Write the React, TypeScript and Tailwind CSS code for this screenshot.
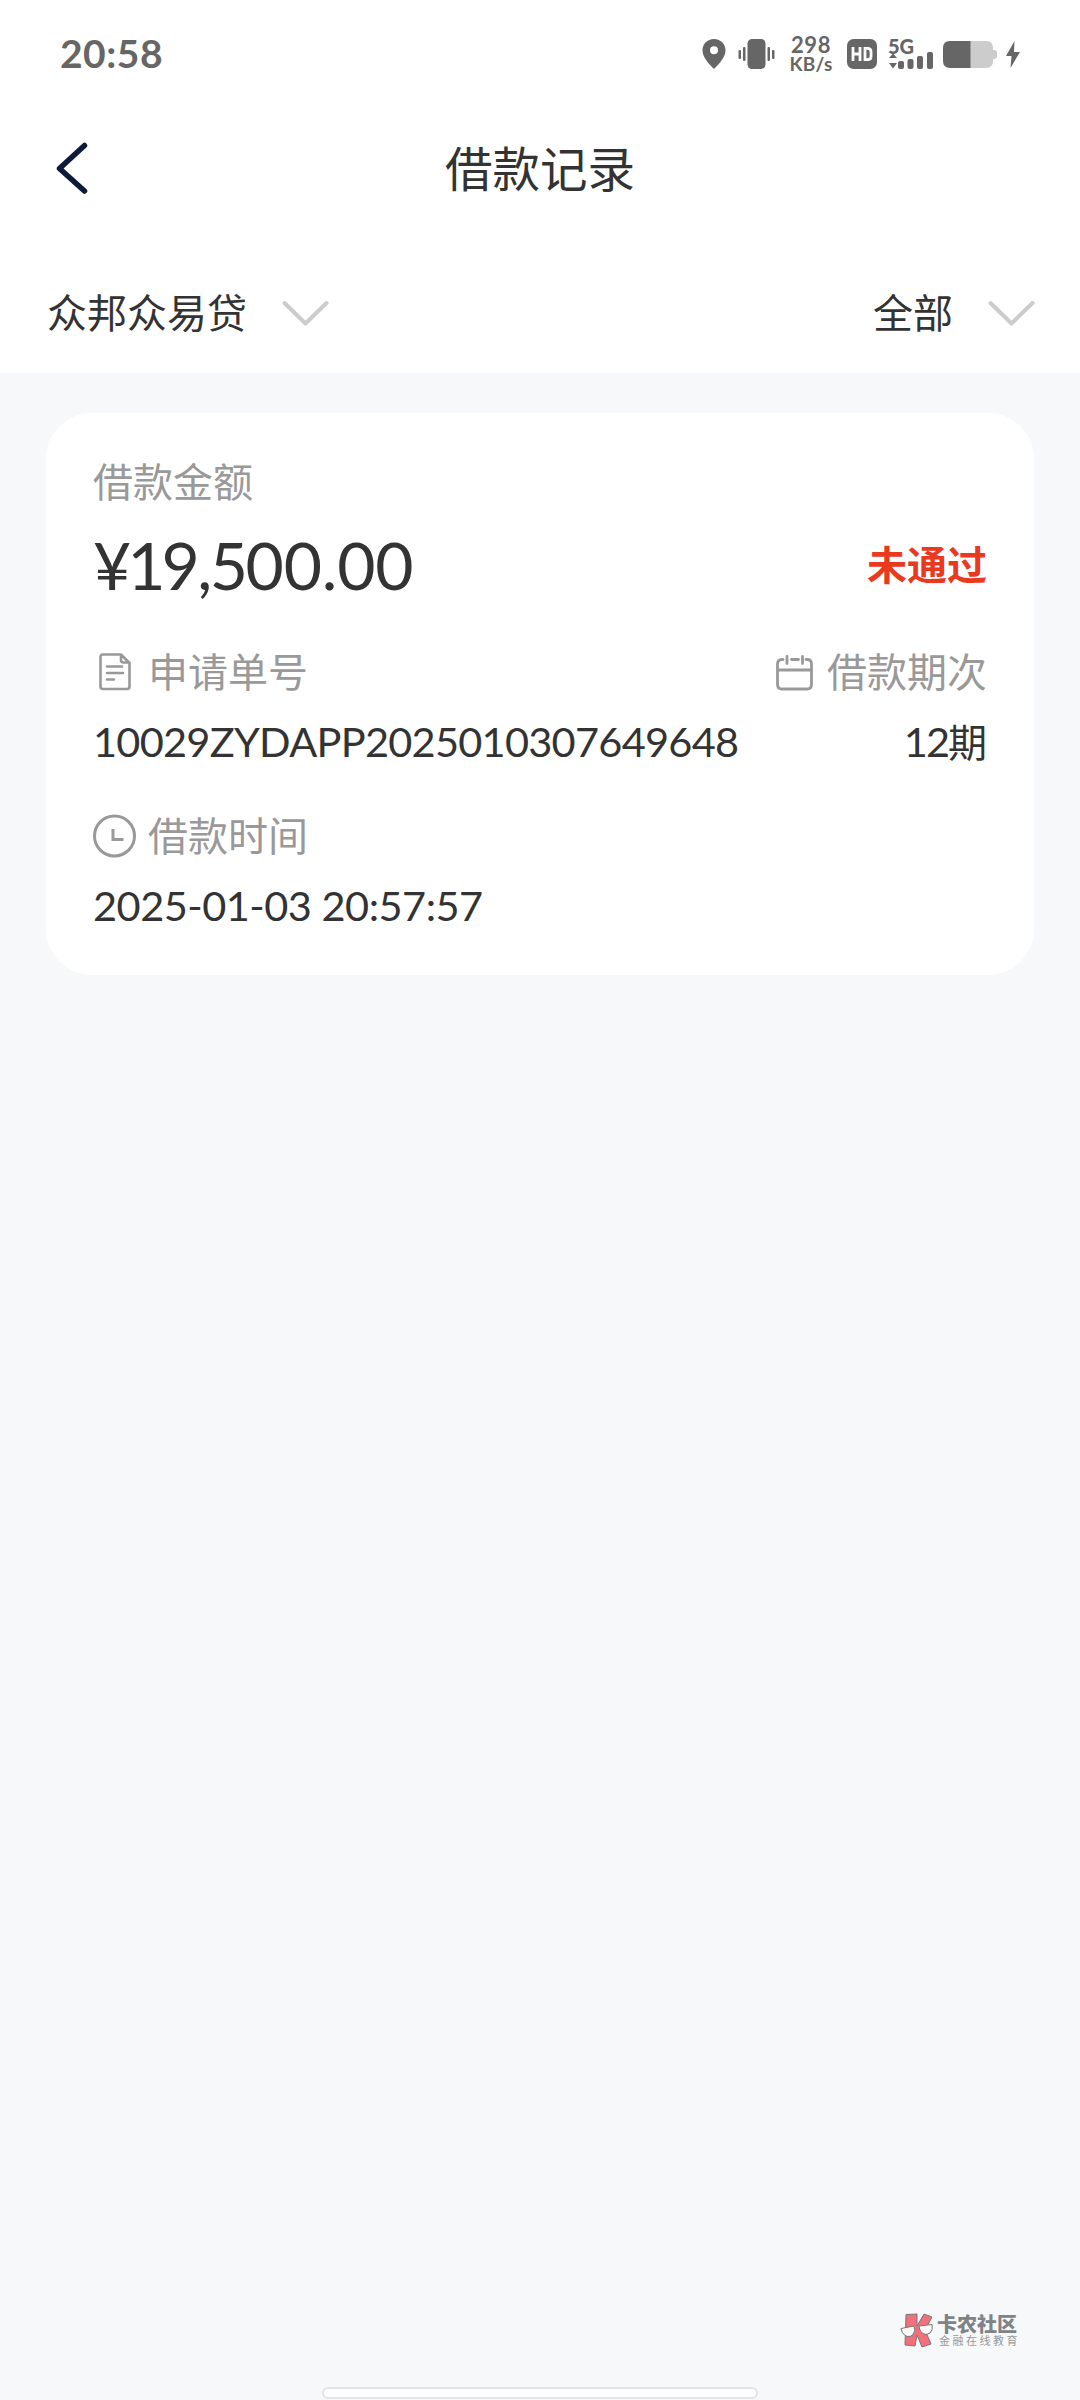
import type { ReactNode } from 'react';

function StatusBar() {
  return (
    <div className="flex h-[108px] items-center justify-between pl-[60px] pr-[60px] font-[Lato,'Noto_Sans_CJK_SC',sans-serif] text-[#666]">
      <span className="-mt-[2px] text-[39px] font-bold leading-none tracking-[0.5px]">20:58</span>
      <div className="flex items-center">
        <svg className="h-[30px] w-6" viewBox="0 0 24 30" fill="currentColor">
          <path fillRule="evenodd" d="M12 0C5.3 0 .5 5 .5 11.3.5 18 6 24 12 30c6-6 11.5-12 11.5-18.700C23.500 5 18.700 0 12 0Zm0 7.200a4 4 0 1 1 0 8 4 4 0 0 1 0-8Z" />
        </svg>
        <svg className="ml-3 h-[30px] w-[37px]" viewBox="0 0 37 30" fill="currentColor">
          <rect x="9.500" width="18" height="30" rx="4.500" />
          <rect x="0.500" y="11" width="2.500" height="9" rx="1" />
          <rect x="5" y="8" width="2.500" height="14" rx="1" />
          <rect x="29.500" y="8" width="2.500" height="14" rx="1" />
          <rect x="34" y="11" width="2.500" height="9" rx="1" />
        </svg>
        <div className="ml-[14px] flex w-[44px] flex-col text-center font-bold leading-[19px]">
          <span className="text-[22px] tracking-[0.6px]">298</span>
          <span className="text-[19px] tracking-[0.3px]">KB/s</span>
        </div>
        <svg className="ml-[14px] h-[30px] w-[30px]" viewBox="0 0 30 30">
          <rect width="30" height="30" rx="6.500" fill="#666" />
          <path d="M6 8v14M13 8v14M6 15h7M18 9.300h2.500q3.500 0 3.500 3.200v5q0 3.200-3.500 3.200H18Z" fill="none" stroke="#fff" strokeWidth="2.800" />
        </svg>
        <div className="ml-[11px] flex h-[30px] w-[46px] flex-col justify-between">
          <span className="h-[14px] text-[20px] font-black leading-[14px]">5G</span>
          <svg className="-mt-1 h-[17px] w-[46px] shrink-0" viewBox="0 0 46 17" fill="currentColor">
            <path d="M1 6 5 1.500 9 6ZM1 11h8l-4 5.500Z" />
            <rect x="10" y="9" width="6" height="8" rx="2" />
            <rect x="19.500" y="7" width="6" height="10" rx="2" />
            <rect x="29" y="4" width="6" height="13" rx="2" />
            <rect x="39" y="0" width="6" height="17" rx="2" />
          </svg>
        </div>
        <svg className="ml-[9px] h-[27px] w-[54px]" viewBox="0 0 54 27">
          <path d="M27 0h16q7 0 7 7v2h1q3 0 3 3v3q0 3-3 3h-1v2q0 7-7 7H27Z" fill="#ccc" />
          <path d="M7 0h20.500v27H7q-7 0-7-7V7q0-7 7-7Z" fill="#666" />
        </svg>
        <svg className="ml-[9px] h-[27px] w-[14px]" viewBox="0 0 14 27" fill="currentColor">
          <path d="M8.500 0 0 15h5.500L4.500 27 14 11H8Z" />
        </svg>
      </div>
    </div>
  );
}

function Filter({ label }: { label: string }) {
  return (
    <button className="flex items-center gap-[35px]">
      <span className="-mt-1 text-[40px] leading-[60px]">{label}</span>
      <svg className="h-[26px] w-[47px]" viewBox="0 0 47 26" fill="none" stroke="#ccc" strokeWidth="4" strokeLinecap="round" strokeLinejoin="round">
        <path d="m2.500 3 21 20.500L44.500 3" />
      </svg>
    </button>
  );
}

function Label({ icon, children }: { icon?: ReactNode; children: ReactNode }) {
  return (
    <div className="flex h-[60px] items-center text-[40px] leading-[60px] text-[#999]">
      {icon}
      <span className="-mt-1">{children}</span>
    </div>
  );
}

const docIcon = (
  <svg className="ml-[6px] mr-[17px] h-[38px] w-8" viewBox="0 0 32 38" fill="none" stroke="#999" strokeWidth="2.600" strokeLinecap="round" strokeLinejoin="round">
    <path d="M22 1.500H4Q1.500 1.500 1.500 4v29.500Q1.500 36 4 36h24q2.500 0 2.500-2.500V10ZM22 1.500V7q0 2.500 2.500 2.500h6M8 13.500h15M8 20h16M8 26.500h7" />
  </svg>
);

const calendarIcon = (
  <svg className="mr-[14px] mt-px h-9 w-[37px]" viewBox="0 0 37 36" fill="none" stroke="#999" strokeWidth="2.800" strokeLinecap="round">
    <path d="M7 4.500H6Q1.500 4.500 1.500 9v20.500Q1.500 34 6 34h25q4.500 0 4.500-4.500V9q0-4.500-4.500-4.500h-1M15.500 4.500h7M11 1.500v7M26.500 1.500v7M1.500 15h34" />
  </svg>
);

const clockIcon = (
  <svg className="mr-[12px] h-11 w-[43px]" viewBox="0 0 43 44" fill="none" stroke="#999" strokeWidth="3">
    <circle cx="21.500" cy="22" r="20" />
    <path d="M20 15v10.500h10.500" />
  </svg>
);

function Watermark() {
  return (
    <div className="flex items-center gap-[3px] text-[#808285]">
      <svg className="h-9 w-[34px]" viewBox="0 0 34 36" stroke="#777" strokeWidth="1">
        <path d="M6 1.500 17 1v12l7-12 8 3-7 13 6 14-9 3-5-12-2 11-10-1Z" fill="#f1707b" />
        <path d="M1 15.500 14 13q2 5-1 8.500-4 4-8.500.5-3-2.500-3.500-6.500ZM19 13l13-1.500q1.500 5-2 8.500-5 3-9-1-2-3-2-6Z" fill="#fafafa" />
      </svg>
      <div className="-mt-[2px] flex flex-col">
        <span className="text-[20px] font-black leading-[20px]">卡农社区</span>
        <span className="pl-[2px] text-[11px] leading-[13px] tracking-[2.500px] text-[#999]">金融在线教育</span>
      </div>
    </div>
  );
}

export default function App() {
  return (
    <div className="flex h-[2400px] w-[1080px] flex-col overflow-hidden bg-[#f6f8fa] font-['Noto_Sans_CJK_SC',sans-serif] text-[#333]">
      <header className="h-[373px] bg-white">
        <StatusBar />
        <div className="flex h-[122px] items-center pl-[56px] pr-[56px]">
          <svg className="-mt-[2px] h-[52px] w-8" viewBox="0 0 32 52" fill="none" stroke="#0e1a3a" strokeWidth="5.500" strokeLinecap="round" strokeLinejoin="round">
            <path d="M28.500 3.500 3.500 26.500l25 22.500" />
          </svg>
          <h1 className="-mt-1 flex-1 text-center text-[47.500px] leading-[72px]">借款记录</h1>
          <div className="w-8" />
        </div>
        <div className="mt-[55px] flex items-center justify-between pl-[47px] pr-[45px]">
          <Filter label="众邦众易贷" />
          <Filter label="全部" />
        </div>
      </header>

      <main className="flex-1 pt-10">
        <section className="mx-[46px] h-[562px] rounded-[46px] bg-white px-[47px] pt-[39px]">
          <Label>借款金额</Label>
          <div className="mt-[23px] flex h-[60px] items-center justify-between">
            <span className="font-[Lato] text-[66px] leading-[60px]">
              <span className="tracking-[-4px]">¥1</span>
              <span className="tracking-[-2.500px]">9,5</span>
              <span className="tracking-[-0.200px]">00.00</span>
            </span>
            <span className="-mt-1 text-[40px] font-bold leading-[60px] text-[#e9391f]">未通过</span>
          </div>
          <div className="mt-[47px] flex justify-between">
            <Label icon={docIcon}>申请单号</Label>
            <Label icon={calendarIcon}>借款期次</Label>
          </div>
          <div className="mt-[9px] flex h-[60px] items-center justify-between font-[Lato,'Noto_Sans_CJK_SC',sans-serif] text-[41.500px] leading-[60px]">
            <span className="tracking-[-0.730px]">10029ZYDAPP2025010307649648</span>
            <span className="tracking-[-2px]">
              12<span className="text-[39px] tracking-normal">期</span>
            </span>
          </div>
          <div className="mt-[35px]">
            <Label icon={clockIcon}>借款时间</Label>
          </div>
          <div className="mt-[9px] h-[60px] font-[Lato] text-[41.500px] leading-[60px] tracking-[-0.500px]">2025-01-03 20:57:57</div>
        </section>
      </main>

      <footer className="flex flex-col items-center">
        <div className="self-end pr-[60px]">
          <Watermark />
        </div>
        <div className="mb-px mt-[38px] h-[12px] w-[436px] rounded-full border-2 border-[#e3e4e5] bg-[#fdfdfd]" />
      </footer>
    </div>
  );
}
